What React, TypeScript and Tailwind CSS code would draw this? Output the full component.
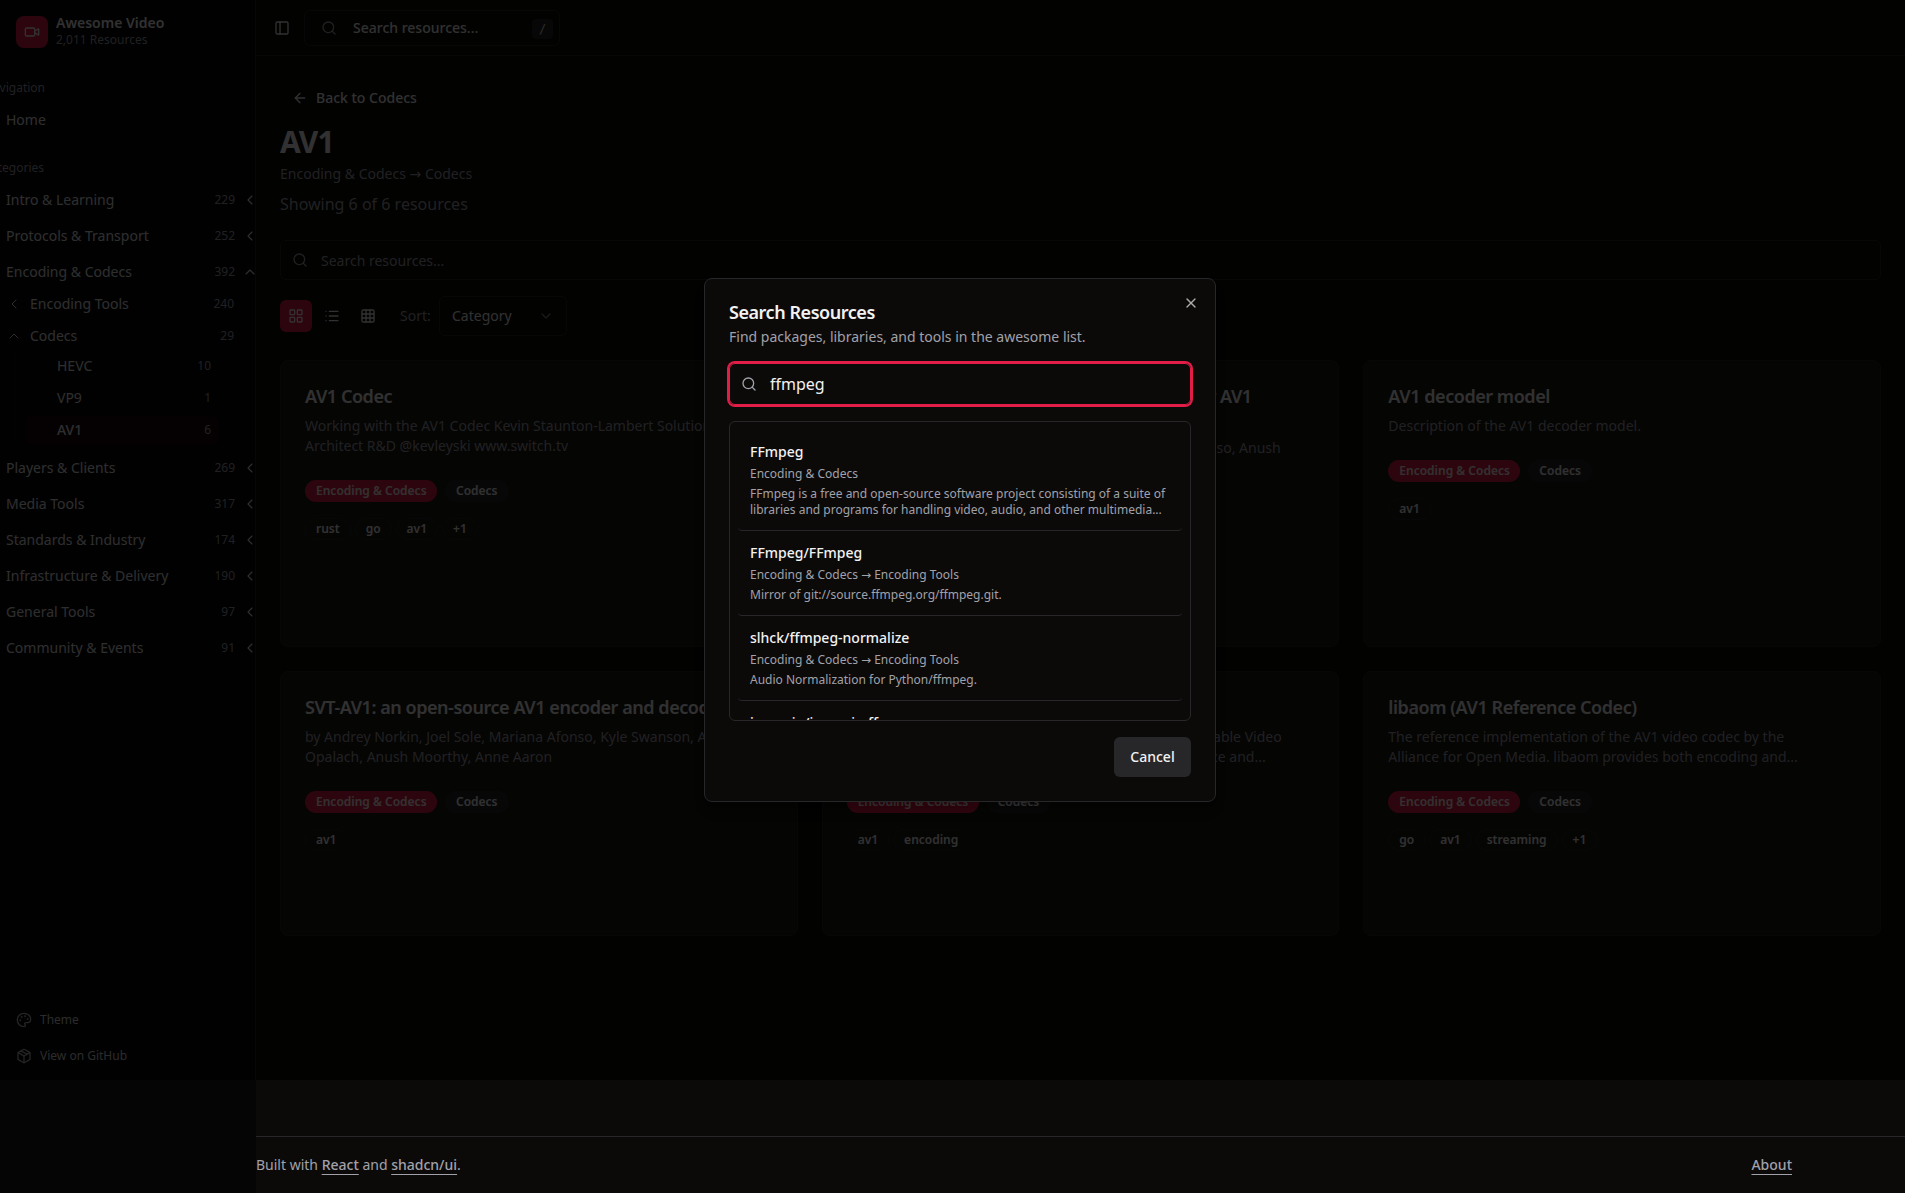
import React from "react";
import {
  ArrowLeft,
  ChevronDown,
  ChevronRight,
  Grid3x3,
  LayoutGrid,
  List,
  Package,
  Palette,
  PanelLeft,
  Search,
  Video,
  X,
} from "lucide-react";

type Category = { name: string; count: number; open?: boolean };

const before: Category[] = [
  { name: "Intro & Learning", count: 229 },
  { name: "Protocols & Transport", count: 252 },
  { name: "Encoding & Codecs", count: 392, open: true },
];

const after: Category[] = [
  { name: "Players & Clients", count: 269 },
  { name: "Media Tools", count: 317 },
  { name: "Standards & Industry", count: 174 },
  { name: "Infrastructure & Delivery", count: 190 },
  { name: "General Tools", count: 97 },
  { name: "Community & Events", count: 91 },
];

function CategoryRow({ name, count, open }: Category) {
  return (
    <div className="flex h-8 items-center pl-1.5 text-sm text-[#e4e4e7]">
      <span className="w-[180px] shrink-0 whitespace-nowrap">{name}</span>
      <span className="w-[49px] shrink-0 text-right text-xs text-[#a1a1aa]">{count}</span>
      <ChevronRight
        strokeWidth={1.75}
        className={open ? "ml-[7px] size-4 shrink-0 -rotate-90" : "ml-[7px] size-4 shrink-0 rotate-180"}
      />
    </div>
  );
}

function SubRow({ name, count, open }: Category) {
  return (
    <div className="flex h-8 items-center pl-1.5 text-sm text-[#e4e4e7]">
      <ChevronRight
        strokeWidth={1.5}
        className={open ? "size-4 shrink-0 -rotate-90" : "size-4 shrink-0 rotate-180"}
      />
      <span className="ml-2 w-[150px] shrink-0">{name}</span>
      <span className="w-[54px] shrink-0 text-right text-xs text-[#a1a1aa]">{count}</span>
    </div>
  );
}

function LeafRow({ name, count, active }: { name: string; count: number; active?: boolean }) {
  return (
    <div
      className={
        active
          ? "flex h-7 items-center justify-between rounded-md bg-[#e11d48]/10 pr-2 pl-8 text-sm font-medium text-[#e4e4e7]"
          : "flex h-7 items-center justify-between rounded-md pr-2 pl-8 text-sm text-[#e4e4e7]"
      }
    >
      <span>{name}</span>
      <span className="text-xs font-normal text-[#a1a1aa]">{count}</span>
    </div>
  );
}

function Sidebar() {
  return (
    <aside className="flex h-[1080px] w-64 shrink-0 flex-col overflow-hidden border-r border-[#27272a] bg-[#050505]">
      <div className="flex h-16 shrink-0 items-center gap-2 px-4">
        <div className="flex size-8 items-center justify-center rounded-lg bg-[#e11d48] text-[#fff1f2]">
          <Video className="size-4" />
        </div>
        <div className="flex flex-col pb-0.5">
          <span className="text-sm leading-[17.5px] font-semibold">Awesome Video</span>
          <span className="text-xs text-[#a1a1aa]">2,011 Resources</span>
        </div>
      </div>
      <div className="mt-2 flex h-8 w-[45px] items-center justify-end text-xs text-[#a1a1aa]">Navigation</div>
      <div className="flex h-8 items-center pl-1.5 text-sm text-[#e4e4e7]">Home</div>
      <div className="mt-4 flex h-8 w-11 items-center justify-end text-xs text-[#a1a1aa]">Categories</div>
      <div className="flex flex-col gap-1">
        {before.map((c) => (
          <CategoryRow key={c.name} {...c} />
        ))}
      </div>
      <SubRow name="Encoding Tools" count={240} />
      <SubRow name="Codecs" count={29} open />
      <div className="mb-2 ml-3.5 flex w-[205px] flex-col gap-1 border-l border-[#27272a]/20 pl-2.5">
        <LeafRow name="HEVC" count={10} />
        <LeafRow name="VP9" count={1} />
        <LeafRow name="AV1" count={6} active />
      </div>
      <div className="flex flex-col gap-1">
        {after.map((c) => (
          <CategoryRow key={c.name} {...c} />
        ))}
      </div>
      <div className="mt-auto flex flex-col gap-1 p-2 text-xs text-[#d4d4d8]">
        <div className="flex h-8 items-center gap-2 px-2">
          <Palette className="size-4 text-[#b4b4bb]" />
          Theme
        </div>
        <div className="flex h-8 items-center gap-2 px-2">
          <Package className="size-4 text-[#b4b4bb]" />
          View on GitHub
        </div>
      </div>
    </aside>
  );
}

type Resource = {
  title: React.ReactNode;
  desc: React.ReactNode;
  tags: string[];
};

const resources: Resource[] = [
  {
    title: "AV1 Codec",
    desc: (
      <>
        Working with the AV1 Codec Kevin Staunton-Lambert Solutions
        <br />
        Architect R&amp;D @kevleyski www.switch.tv
      </>
    ),
    tags: ["rust", "go", "av1", "+1"],
  },
  {
    title: (
      <>
        <span className="flex w-[405px] justify-end whitespace-nowrap">SVT-AV1: open-source encoder for AV1</span>
        <span className="block">and decoder</span>
      </>
    ),
    desc: (
      <>
        <span className="flex w-[434px] justify-end whitespace-nowrap">by Andrey Norkin, Joel Sole, Mariana Afonso, Anush</span>
        <span className="block">Moorthy, Anne Aaron</span>
      </>
    ),
    tags: ["av1"],
  },
  { title: "AV1 decoder model", desc: "Description of the AV1 decoder model.", tags: ["av1"] },
  {
    title: "SVT-AV1: an open-source AV1 encoder and decoder",
    desc: (
      <>
        by Andrey Norkin, Joel Sole, Mariana Afonso, Kyle Swanson, Andrzej
        <br />
        Opalach, Anush Moorthy, Anne Aaron
      </>
    ),
    tags: ["av1"],
  },
  {
    title: "SVT-AV1",
    desc: (
      <>
        <span className="flex w-[435px] justify-end whitespace-nowrap">Scalable Video Technology for AV1, a scalable Video</span>
        <span className="flex w-[419px] justify-end whitespace-nowrap">encoder with high performance and...</span>
      </>
    ),
    tags: ["av1", "encoding"],
  },
  {
    title: "libaom (AV1 Reference Codec)",
    desc: (
      <>
        The reference implementation of the AV1 video codec by the
        <br />
        Alliance for Open Media. libaom provides both encoding and...
      </>
    ),
    tags: ["go", "av1", "streaming", "+1"],
  },
];

function ResourceCard({ title, desc, tags }: Resource) {
  return (
    <article className="rounded-lg border border-[#27272a] bg-[#1c1917] p-6">
      <h3 className="text-lg leading-tight font-semibold tracking-tight whitespace-nowrap">{title}</h3>
      <p className="mt-2 text-sm whitespace-nowrap text-[#a1a1aa]">{desc}</p>
      <div className="mt-6 flex gap-2 text-xs font-semibold">
        <span className="w-[132px] rounded-full bg-[#e11d48] px-[11px] py-[3px] whitespace-nowrap text-[#fff1f2]">
          Encoding &amp; Codecs
        </span>
        <span className="rounded-full border border-transparent bg-[#27272a] px-2.5 py-0.5">Codecs</span>
      </div>
      <div className="mt-4 flex gap-1 text-xs font-semibold">
        {tags.map((t) => (
          <span key={t} className="rounded-full border border-[#27272a] px-2.5 py-0.5">
            {t}
          </span>
        ))}
      </div>
    </article>
  );
}

function Content() {
  return (
    <main className="flex min-w-0 flex-1 flex-col bg-[#0c0a09]">
      <header className="flex h-14 shrink-0 items-center border-b border-[#27272a] pl-3">
        <div className="flex size-7 items-center justify-center">
          <PanelLeft className="size-4" />
        </div>
        <div className="ml-2 flex h-9 w-64 items-center rounded-md border border-[#27272a] pr-1.5 pl-4 text-sm font-medium">
          <Search className="mr-4 size-4 text-[#a1a1aa]" />
          Search resources...
          <kbd className="mt-0.5 ml-auto flex h-5 w-[21px] items-center justify-center rounded border border-[#27272a] bg-[#27272a] font-['DejaVu_Sans_Mono',monospace] text-xs text-[#d4d4d8]">
            /
          </kbd>
        </div>
      </header>
      <div className="flex h-[1024px] shrink-0 flex-col p-6">
        <div className="flex h-9 items-center gap-2 px-3 text-sm font-medium">
          <ArrowLeft className="size-4" />
          Back to Codecs
        </div>
        <h1 className="mt-2 text-3xl font-bold tracking-tight">AV1</h1>
        <p className="mt-1 text-sm leading-5 text-[#a1a1aa]">Encoding &amp; Codecs → Codecs</p>
        <p className="mt-2 text-base text-[#a1a1aa]">Showing 6 of 6 resources</p>
        <div className="mt-6 flex h-10 shrink-0 items-center gap-[13px] rounded-md border border-[#27272a] px-[11px] text-sm text-[#a1a1aa]">
          <Search className="size-4" />
          <span className="pt-0.5">Search resources...</span>
        </div>
        <div className="mt-4 flex h-10 shrink-0 items-center">
          <div className="flex size-8 items-center justify-center rounded-md bg-[#e11d48] text-[#fff1f2]">
            <LayoutGrid className="size-4" />
          </div>
          <div className="ml-1 flex size-8 items-center justify-center">
            <List className="size-4" />
          </div>
          <div className="ml-1 flex size-8 items-center justify-center">
            <Grid3x3 className="size-4" />
          </div>
          <span className="ml-4 w-[39px] text-sm text-[#a1a1aa]">Sort:</span>
          <div className="flex h-10 w-32 items-center justify-between rounded-md border border-[#27272a] px-3 text-sm">
            Category
            <ChevronDown className="size-4 opacity-50" />
          </div>
        </div>
        <div className="mt-6 grid grid-cols-3 grid-rows-[287px_265px] gap-6">
          {resources.map((r, i) => (
            <ResourceCard key={i} {...r} />
          ))}
        </div>
      </div>
      <footer className="mt-14 flex h-[57px] items-center border-t border-[#27272a] text-sm text-[#a1a1aa]">
        <div className="flex w-[1536px] items-center justify-between">
          <p>
            Built with <span className="font-medium underline underline-offset-4">React</span> and{" "}
            <span className="font-medium underline underline-offset-4">shadcn/ui</span>.
          </p>
          <span className="font-medium underline underline-offset-4">About</span>
        </div>
      </footer>
    </main>
  );
}

const results = [
  {
    name: "FFmpeg",
    path: "Encoding & Codecs",
    desc: "FFmpeg is a free and open-source software project consisting of a suite of libraries and programs for handling video, audio, and other multimedia...",
  },
  {
    name: "FFmpeg/FFmpeg",
    path: "Encoding & Codecs → Encoding Tools",
    desc: "Mirror of git://source.ffmpeg.org/ffmpeg.git.",
  },
  {
    name: "slhck/ffmpeg-normalize",
    path: "Encoding & Codecs → Encoding Tools",
    desc: "Audio Normalization for Python/ffmpeg.",
  },
  { name: "imageio/imageio-ffmpeg", path: "Encoding & Codecs → Encoding Tools", desc: "FFMPEG wrapper for Python." },
];

function SearchDialog() {
  return (
    <div className="absolute top-[278px] left-[704px] flex w-[512px] flex-col gap-4 rounded-lg border border-[#27272a] bg-[#0c0a09] p-6 shadow-lg">
      <div className="flex flex-col gap-1.5">
        <h2 className="text-lg leading-none font-semibold tracking-tight">Search Resources</h2>
        <p className="text-sm text-[#a1a1aa]">Find packages, libraries, and tools in the awesome list.</p>
      </div>
      <div className="flex h-[42px] items-center gap-[13px] rounded-md border border-[#e11d48] px-[11px] text-base ring-2 ring-[#e11d48]">
        <Search className="size-4 text-[#a1a1aa]" />
        ffmpeg
      </div>
      <div className="h-[300px] overflow-hidden rounded-md border border-[#27272a] p-2">
        {results.map((r) => (
          <div key={r.name} className="rounded-sm border-b border-[#27272a] p-3">
            <div className="text-sm font-medium">{r.name}</div>
            <div className="mt-1 text-xs text-[#a1a1aa]">{r.path}</div>
            <div className="mt-1 text-xs text-[#a1a1aa]">{r.desc}</div>
          </div>
        ))}
      </div>
      <div className="flex justify-end">
        <button className="h-10 w-[77px] rounded-md bg-[#27272a] text-sm font-medium">Cancel</button>
      </div>
      <X className="absolute top-4 right-4 size-4 opacity-70" />
    </div>
  );
}

export default function App() {
  return (
    <div className="relative flex h-[1193px] w-full overflow-hidden bg-[#050505] font-['Noto_Sans','DejaVu_Sans',sans-serif] text-[#f2f2f2]">
      <Sidebar />
      <Content />
      <div className="absolute inset-x-0 top-0 h-[1080px] bg-black/80" />
      <SearchDialog />
    </div>
  );
}
